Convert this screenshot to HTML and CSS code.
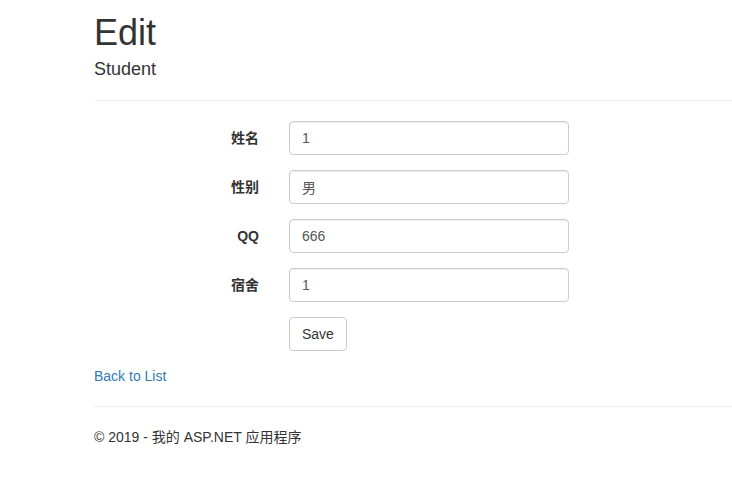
FILE: index.html
```html
<!DOCTYPE html>
<html lang="zh-CN">
<head>
  <meta charset="UTF-8" />
  <meta name="viewport" content="width=device-width, initial-scale=1.0" />
  <title>Edit - 我的 ASP.NET 应用程序</title>
  <link rel="stylesheet" href="styles.css">
</head>
<body>
  <div class="container body-content">
    <h2>Edit</h2>

    <form class="form-horizontal">
      <h4>Student</h4>
      <hr />

      <div class="form-group">
        <label class="control-label" for="Name">姓名</label>
        <div class="field">
          <input class="form-control" type="text" id="Name" value="1" />
        </div>
      </div>

      <div class="form-group">
        <label class="control-label" for="Sex">性别</label>
        <div class="field">
          <input class="form-control" type="text" id="Sex" value="男" />
        </div>
      </div>

      <div class="form-group">
        <label class="control-label" for="QQ">QQ</label>
        <div class="field">
          <input class="form-control" type="text" id="QQ" value="666" />
        </div>
      </div>

      <div class="form-group">
        <label class="control-label" for="Dorm">宿舍</label>
        <div class="field">
          <input class="form-control" type="text" id="Dorm" value="1" />
        </div>
      </div>

      <div class="form-group">
        <div class="field offset">
          <button type="button" class="btn btn-default">Save</button>
        </div>
      </div>
    </form>

    <div class="back">
      <a href="#">Back to List</a>
    </div>

    <hr />
    <footer>
      <p>&copy; 2019 - 我的 ASP.NET 应用程序</p>
    </footer>
  </div>
</body>
</html>
```

FILE: styles.css
```css
body {
  margin: 0;
  font-family: "Liberation Sans", "Noto Sans CJK SC", sans-serif;
  font-size: 14px;
  line-height: 1.42857143;
  color: #333;
  background-color: #fff;
}
.container {
  margin-left: 79px;
  padding: 0 0 0 15px;
}
h2 {
  margin: 13px 0 7px;
  font-size: 36px;
  font-weight: normal;
  line-height: 1.1;
}
h4 {
  margin: 0;
  font-size: 18px;
  font-weight: normal;
  line-height: 1.1;
}
hr {
  margin: 21px 0 20px;
  border: 0;
  border-top: 1px solid #eee;
  height: 0;
}
.back + hr {
  margin-top: 20px;
}
.form-group {
  display: flex;
  margin: 0 0 15px -15px;
}
.control-label {
  width: 195px;
  box-sizing: border-box;
  padding: 7px 15px 0;
  text-align: right;
  font-weight: bold;
}
.field {
  padding: 0 15px;
}
.field.offset {
  margin-left: 195px;
}
.form-control {
  display: block;
  width: 280px;
  height: 34px;
  box-sizing: border-box;
  padding: 6px 12px;
  font-family: inherit;
  font-size: 14px;
  line-height: 1.42857143;
  color: #555;
  background-color: #fff;
  border: 1px solid #ccc;
  border-radius: 4px;
  box-shadow: inset 0 1px 1px rgba(0, 0, 0, 0.075);
}
.btn {
  display: inline-block;
  height: 34px;
  box-sizing: border-box;
  padding: 6px 12px;
  font-family: inherit;
  font-size: 14px;
  line-height: 1.42857143;
  border: 1px solid transparent;
  border-radius: 4px;
  cursor: pointer;
}
.btn-default {
  color: #333;
  background-color: #fff;
  border-color: #ccc;
}
a {
  color: #337ab7;
  text-decoration: none;
}
footer p {
  margin: 0 0 10px;
}
```
